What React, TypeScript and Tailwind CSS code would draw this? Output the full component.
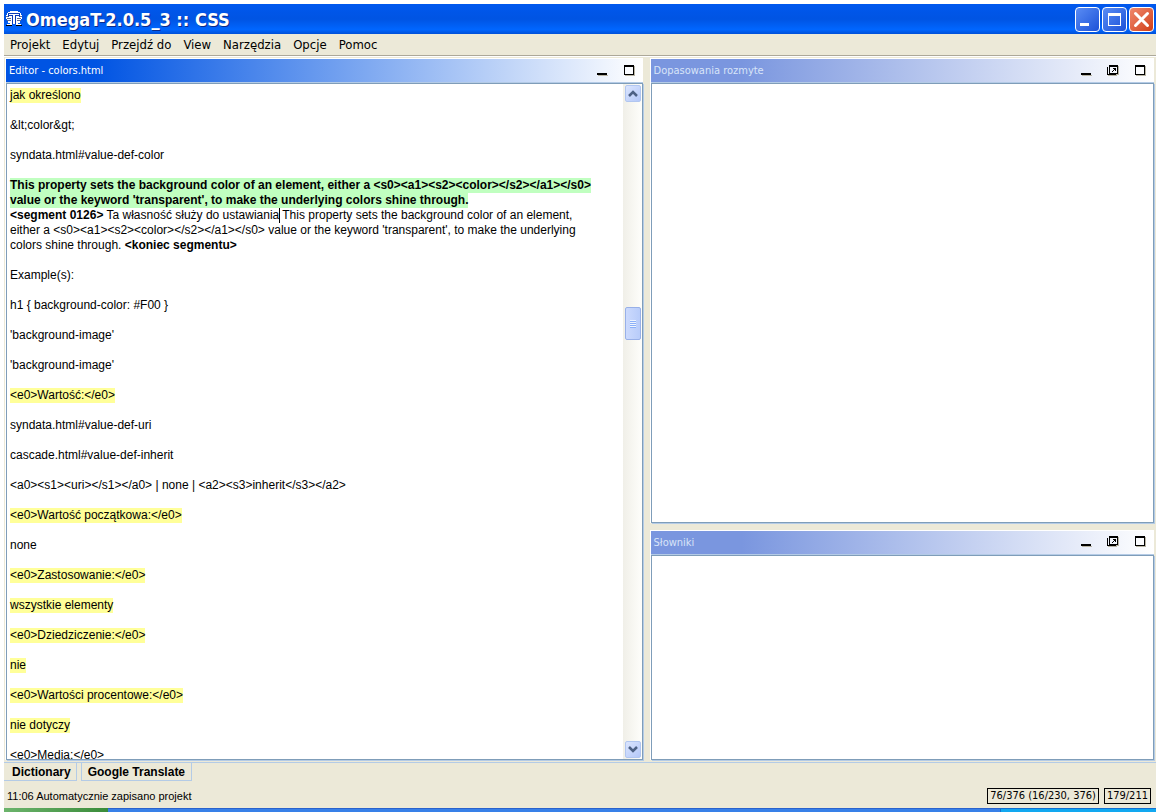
import React from "react";

const lines: { text: string; mark?: boolean }[] = [
  { text: "Example(s):" },
  { text: "h1 { background-color: #F00 }" },
  { text: "'background-image'" },
  { text: "'background-image'" },
  { text: "<e0>Wartość:</e0>", mark: true },
  { text: "syndata.html#value-def-uri" },
  { text: "cascade.html#value-def-inherit" },
  { text: "<a0><s1><uri></s1></a0> | none | <a2><s3>inherit</s3></a2>" },
  { text: "<e0>Wartość początkowa:</e0>", mark: true },
  { text: "none" },
  { text: "<e0>Zastosowanie:</e0>", mark: true },
  { text: "wszystkie elementy", mark: true },
  { text: "<e0>Dziedziczenie:</e0>", mark: true },
  { text: "nie", mark: true },
  { text: "<e0>Wartości procentowe:</e0>", mark: true },
  { text: "nie dotyczy", mark: true },
  { text: "<e0>Media:</e0>" },
];

const menus = ["Projekt", "Edytuj", "Przejdź do", "View", "Narzędzia", "Opcje", "Pomoc"];

function AppIcon() {
  return (
    <svg width="16" height="16" viewBox="0 0 16 16" shapeRendering="crispEdges" aria-hidden="true">
      <path d="M4 0h8v1h2v1h1v2h1v4h-1v2h-1v2h-2v1h3v1h-5v-1H6v1H1v-1h3v-1H2v-2H1V8H0V4h1V2h1V1h2z" fill="#fff" />
      <path d="M0 5h3v1H0zM13 5h3v1h-3zM1 7h4v1H1zM11 7h4v1h-4zM1 9h4v1H1zM11 9h4v1h-4z" fill="#5c6c94" />
      <path d="M2 2h12v4h-1V5h-3v8H9V4h4V3H3v1h4v9H6V5H3v1H2z" fill="#0a3cb8" />
      <path d="M0 14h6v1H0zM10 14h6v1h-6z" fill="#000" />
    </svg>
  );
}

function MinIcon() {
  return (
    <svg width="12" height="12" viewBox="0 0 12 12" shapeRendering="crispEdges" aria-hidden="true">
      <path d="M2 10h10v1H2z" fill="#b8b4a4" />
      <path d="M1 8h10v2H1z" fill="#000" />
    </svg>
  );
}

function MaxIcon() {
  return (
    <svg width="12" height="12" viewBox="0 0 12 12" shapeRendering="crispEdges" aria-hidden="true">
      <path d="M11 1h1v10H2v-1h9z" fill="#b8b4a4" />
      <path d="M1 0h10v10H1zM2 2v7h8V2z" fill="#000" fillRule="evenodd" />
    </svg>
  );
}

function UndockIcon() {
  return (
    <svg width="12" height="12" viewBox="0 0 12 12" shapeRendering="crispEdges" aria-hidden="true">
      <path d="M11 1h1v9h-2v1H1v-1h8V9h2z" fill="#b8b4a4" />
      <path d="M2 0h9v9H2zM3 2v6h7V2z" fill="#000" fillRule="evenodd" />
      <path d="M0 2h1v7h8v1H0zM6 3h3v3H8V5H7v1H6v1H5V6h1V5h1V4H6z" fill="#000" />
    </svg>
  );
}

function PaneHeader({ title, active }: { title: string; active?: boolean }) {
  return (
    <header
      className={
        "flex h-6 shrink-0 items-center justify-between border-b border-[#b4cbe6] pr-2 pl-[3px] font-['DejaVu_Sans_Condensed','Noto_Sans',sans-serif] text-[11px] " +
        (active
          ? "bg-[linear-gradient(90deg,#0054e3_0%,#0054e3_14%,#fff_100%)] text-white"
          : "bg-[linear-gradient(90deg,#7a96df_0%,#7a96df_18%,#fff_100%)] text-[#d8e4f8]")
      }
    >
      <h2>{title}</h2>
      <div className="flex gap-[15px]">
        <button aria-label={"Minimalizuj " + title}><MinIcon /></button>
        {!active && <button aria-label={"Oddokuj " + title}><UndockIcon /></button>}
        <button aria-label={"Maksymalizuj " + title}><MaxIcon /></button>
      </div>
    </header>
  );
}

function Pane({ title, className }: { title: string; className: string }) {
  return (
    <section className={"flex min-h-0 flex-col border-t border-l border-white " + className}>
      <PaneHeader title={title} />
      <div className="flex-1 border border-[#7f9db9] bg-white shadow-[1px_1px_0_#b4cbe6]" />
    </section>
  );
}

function Arrow({ down }: { down?: boolean }) {
  return (
    <button
      aria-label={down ? "Przewiń w dół" : "Przewiń w górę"}
      className="flex h-[17px] w-4 shrink-0 items-center justify-center rounded-xs border border-[#b1c6f0] bg-linear-to-br from-[#dbe5fe] to-[#b4c8f8]"
    >
      <svg width="10" height="7" viewBox="0 0 10 7" aria-hidden="true">
        <path d={down ? "M1 1l4 4L9 1" : "M1 6l4-4L9 6"} fill="none" stroke="#4d6185" strokeWidth="2.500" />
      </svg>
    </button>
  );
}

const winButton = "flex size-[25px] items-center justify-center rounded-[4px] border border-white";

export default function App() {
  return (
    <div className="h-screen overflow-hidden bg-white px-1 pt-1 text-black">
      <div className="flex h-full flex-col bg-[#ece9d8] font-['Liberation_Sans',Arial,sans-serif] text-[12px] leading-[15px]">
        <header className="flex h-[30px] shrink-0 items-center justify-between bg-[linear-gradient(180deg,#0058ee_0%,#0054e3_50%,#0066ff_85%,#0050d8_100%)] px-[2px]">
          <div className="flex items-center gap-1">
            <AppIcon />
            <h1 className="font-['DejaVu_Sans_Condensed','Noto_Sans',sans-serif] text-[18px] font-bold text-white [text-shadow:1px_1px_0_#0a2a8a]">
              OmegaT-2.0.5_3 :: CSS
            </h1>
          </div>
          <div className="flex gap-[2px]">
            <button aria-label="Minimalizuj" className={winButton + " bg-linear-to-br from-[#5a8cf4] to-[#1c50d8]"}>
              <svg width="17" height="17" viewBox="0 0 17 17" aria-hidden="true"><path d="M1 12h9v3H1z" fill="#fff" /></svg>
            </button>
            <button aria-label="Maksymalizuj" className={winButton + " bg-linear-to-br from-[#5a8cf4] to-[#1c50d8]"}>
              <svg width="17" height="17" viewBox="0 0 17 17" aria-hidden="true"><path d="M2 2h13v13H2zM3 5v9h11V5z" fill="#fff" fillRule="evenodd" /></svg>
            </button>
            <button aria-label="Zamknij" className={winButton + " bg-linear-to-br from-[#f0886c] to-[#d03c10]"}>
              <svg width="17" height="17" viewBox="0 0 17 17" aria-hidden="true"><path d="M2.500 2.500l12 12M14.500 2.500l-12 12" stroke="#fff" strokeWidth="3" strokeLinecap="round" /></svg>
            </button>
          </div>
        </header>

        <nav className="flex h-[22px] shrink-0 items-center gap-3 border-b border-[#aca899] pl-1.5 font-['DejaVu_Sans_Condensed','Noto_Sans',sans-serif] text-[13px]">
          {menus.map((m) => (
            <button key={m}>{m}</button>
          ))}
        </nav>

        <main className="grid min-h-0 flex-1 grid-cols-[637fr_504fr] gap-[7px] border-t border-white pt-px pr-[2px] pb-[2px] pl-px">
          <section className="flex min-h-0 flex-col border-t border-l border-white">
            <PaneHeader title="Editor - colors.html" active />
            <div className="flex min-h-0 flex-1 border border-[#7f9db9] bg-white shadow-[1px_1px_0_#b4cbe6]">
              <div
                role="textbox"
                aria-label="Editor"
                aria-multiline="true"
                contentEditable
                suppressContentEditableWarning
                spellCheck={false}
                className="min-w-0 flex-1 overflow-hidden pt-1 pl-[3px] whitespace-nowrap outline-none"
              >
                <p className="mb-[15px] flex"><span className="bg-[#ffff99]">jak określono</span></p>
                <p className="mb-[15px]">&amp;lt;color&amp;gt;</p>
                <p className="mb-[15px]">syndata.html#value-def-color</p>
                <p className="flex flex-col items-start font-bold">
                  <span className="bg-[#c0ffc0]">
                    {"This property sets the background color of an element, either a <s0><a1><s2><color></s2></a1></s0>"}
                  </span>
                  <span className="bg-[#c0ffc0]">
                    value or the keyword 'transparent', to make the underlying colors shine through.
                  </span>
                </p>
                <p className="mb-[15px]">
                  <b>{"<segment 0126>"}</b> Ta własność służy do ustawiania
                  <span className="mr-[2px] inline-block h-[15px] w-px bg-black align-top" />
                  This property sets the background color of an element,
                  <br />
                  {"either a <s0><a1><s2><color></s2></a1></s0> value or the keyword 'transparent', to make the underlying"}
                  <br />
                  colors shine through. <b>{"<koniec segmentu>"}</b>
                </p>
                {lines.map((l, i) => (
                  <p key={i} className="mb-[15px] flex">
                    <span className={l.mark ? "bg-[#ffff99]" : ""}>{l.text}</span>
                  </p>
                ))}
              </div>
              <div className="flex w-[19px] shrink-0 flex-col bg-linear-to-r from-[#f0efe8] to-[#fefefb] py-px pl-[2px]">
                <Arrow />
                <div className="flex-[205]" />
                <div className="flex h-[33px] w-4 shrink-0 flex-col items-center justify-center rounded-xs border border-[#98b0e8] bg-linear-to-r from-[#ccdafd] to-[#b8ccfa]">
                  <i className="h-px w-1.5 bg-[#eef4fe]" />
                  <i className="h-px w-1.5 bg-[#8cb0f8]" />
                  <i className="h-px w-1.5 bg-[#eef4fe]" />
                  <i className="h-px w-1.5 bg-[#8cb0f8]" />
                  <i className="h-px w-1.5 bg-[#eef4fe]" />
                  <i className="h-px w-1.5 bg-[#8cb0f8]" />
                  <i className="h-px w-1.5 bg-[#eef4fe]" />
                  <i className="h-px w-1.5 bg-[#8cb0f8]" />
                </div>
                <div className="flex-[401]" />
                <Arrow down />
              </div>
            </div>
          </section>
          <div className="flex min-h-0 flex-col gap-[7px]">
            <Pane title="Dopasowania rozmyte" className="flex-[466]" />
            <Pane title="Słowniki" className="flex-[230]" />
          </div>
        </main>

        <div className="flex h-[19px] shrink-0 gap-1 border-t border-[#b4cbe6] font-bold">
          <button className="border-r border-b border-[#b4cbe6] pt-px pr-[5px] pl-2">Dictionary</button>
          <button className="border-x border-b border-[#b4cbe6] px-1.5 pt-px">Google Translate</button>
        </div>

        <footer className="flex h-[27px] shrink-0 items-center justify-between pt-[2px] pr-[5px] pl-[3px] text-[11px]">
          <span className="pt-px">11:06 Automatycznie zapisano projekt</span>
          <div className="flex gap-[5px] font-['DejaVu_Sans_Condensed','Noto_Sans',sans-serif]">
            <span className="border border-black px-[2px] leading-[14px]">76/376 (16/230, 376)</span>
            <span className="border border-black px-[2px] leading-[14px]">179/211</span>
          </div>
        </footer>
        <div className="flex h-1 shrink-0">
          <div className="w-[104px] bg-linear-to-r from-[#6cb46c] to-[#3a8c3a]" />
          <div className="flex-1 border-t border-[#2a62cc] bg-[#3880e8]" />
          <div className="w-[156px] border-t border-l border-[#1470d0] bg-[#12a8f0]" />
        </div>
      </div>
    </div>
  );
}
